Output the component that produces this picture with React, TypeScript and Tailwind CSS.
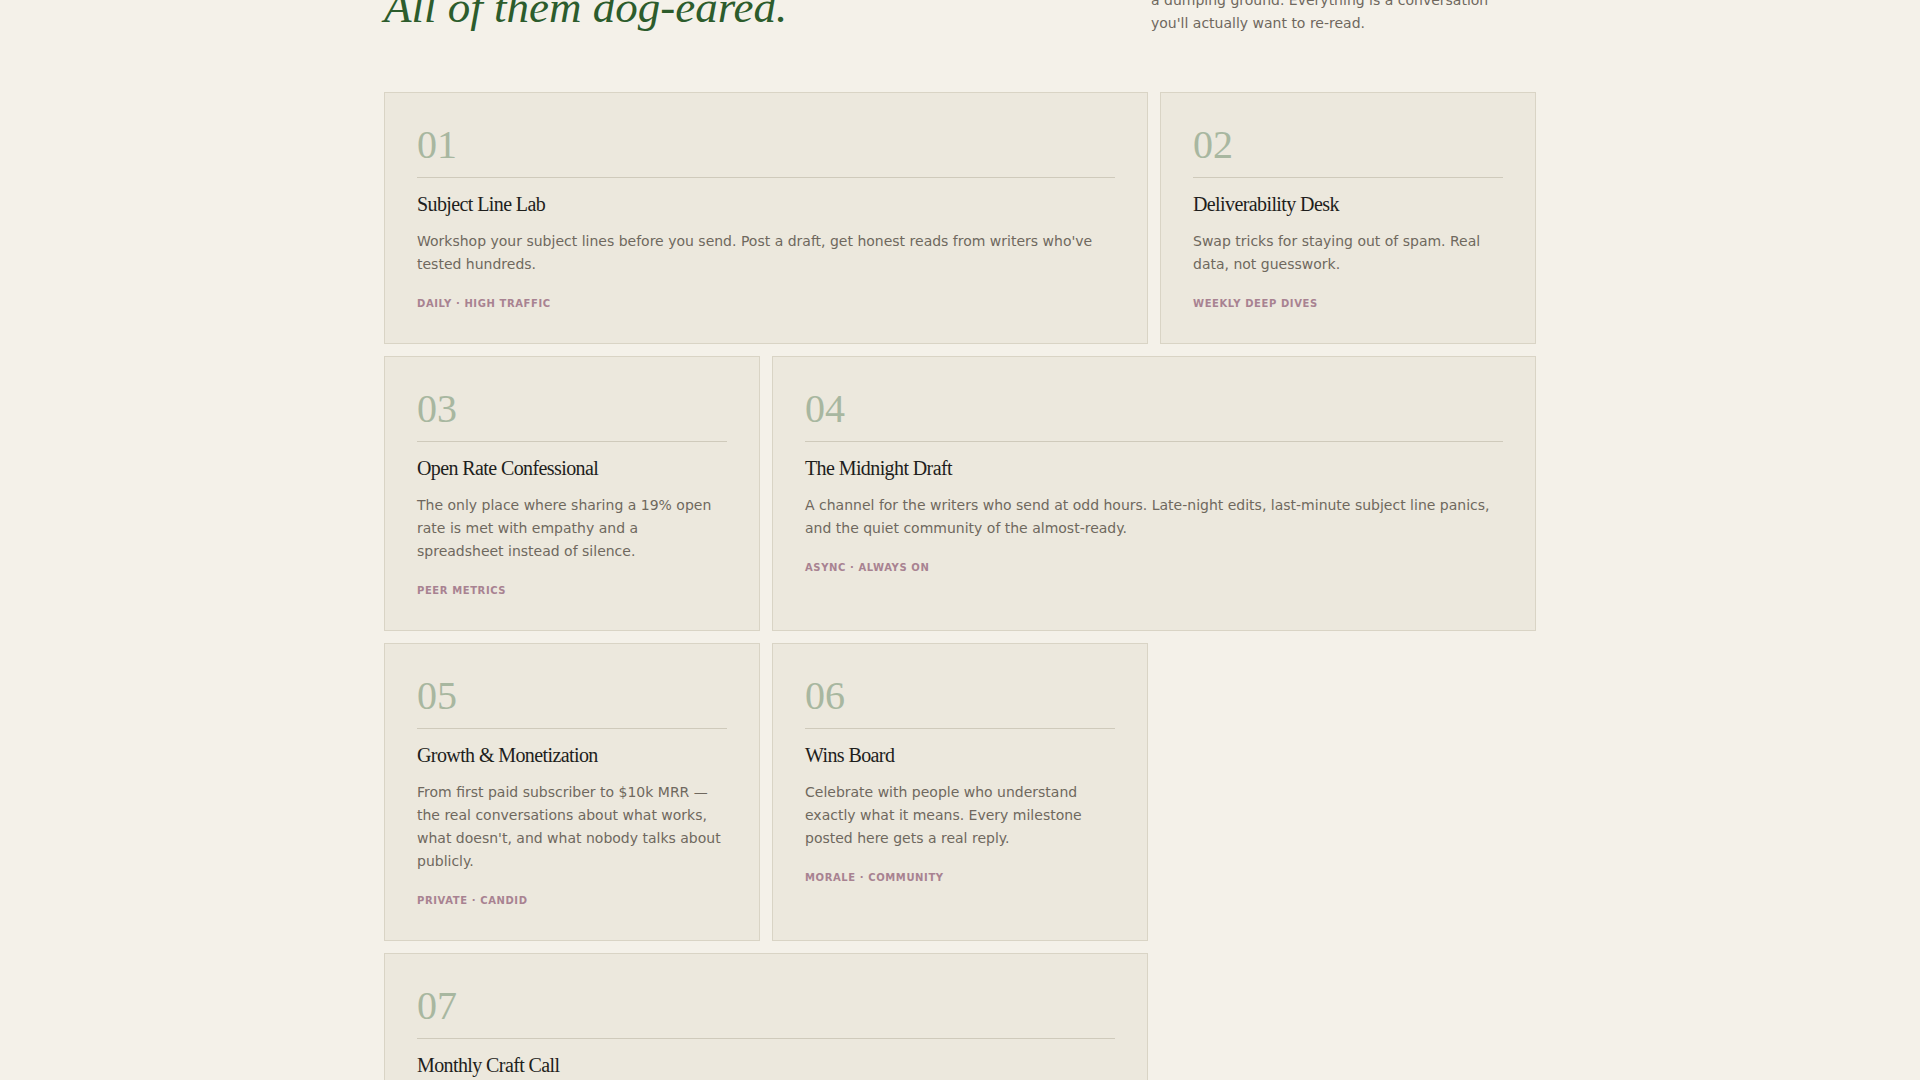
import React from "react";

type Channel = {
  num: string;
  title: string;
  body: string;
  tag: string;
  wide?: boolean;
};

const channels: Channel[] = [
  {
    num: "01",
    title: "Subject Line Lab",
    body: "Workshop your subject lines before you send. Post a draft, get honest reads from writers who've tested hundreds.",
    tag: "Daily · High traffic",
    wide: true,
  },
  {
    num: "02",
    title: "Deliverability Desk",
    body: "Swap tricks for staying out of spam. Real data, not guesswork.",
    tag: "Weekly deep dives",
  },
  {
    num: "03",
    title: "Open Rate Confessional",
    body: "The only place where sharing a 19% open rate is met with empathy and a spreadsheet instead of silence.",
    tag: "Peer metrics",
  },
  {
    num: "04",
    title: "The Midnight Draft",
    body: "A channel for the writers who send at odd hours. Late-night edits, last-minute subject line panics, and the quiet community of the almost-ready.",
    tag: "Async · Always on",
    wide: true,
  },
  {
    num: "05",
    title: "Growth & Monetization",
    body: "From first paid subscriber to $10k MRR — the real conversations about what works, what doesn't, and what nobody talks about publicly.",
    tag: "Private · Candid",
  },
  {
    num: "06",
    title: "Wins Board",
    body: "Celebrate with people who understand exactly what it means. Every milestone posted here gets a real reply.",
    tag: "Morale · Community",
  },
  {
    num: "07",
    title: "Monthly Craft Call",
    body: "Once a month we take one issue apart together — structure, voice, hooks — and rebuild it live.",
    tag: "Monthly · Live",
    wide: true,
  },
];

const serif = "font-['Liberation_Serif','Times_New_Roman',serif]";
const sans = "font-['DejaVu_Sans','Noto_Sans',sans-serif]";

const ChannelCard = ({ c }: { c: Channel }) => (
  <div
    className={`flex flex-col border border-[#d9d4c5] bg-[#ece8dd] p-8 ${
      c.wide ? "col-span-2" : ""
    }`}
  >
    <div
      className={`${serif} border-b border-[#cfcabb] pb-3 text-[40px] leading-none text-[#a8b7a0]`}
    >
      {c.num}
    </div>
    <h3
      className={`${serif} mt-3 text-[20px] leading-[28px] tracking-[-0.03em] text-[#1e1e1c]`}
    >
      {c.title}
    </h3>
    <p className={`${sans} mt-3 text-[14px] leading-[23px] text-[#6f685e]`}>
      {c.body}
    </p>
    <div
      className={`${sans} mt-5 text-[10px] font-bold uppercase leading-[15px] tracking-[0.06em] text-[#a88291]`}
    >
      {c.tag}
    </div>
  </div>
);

export default function App() {
  return (
    <div className="flex min-h-screen flex-col bg-[#f4f1e9]">
      <div className="mx-auto -mt-[17px] w-[1152px]">
        <header className="mb-[59px] flex items-end justify-between">
          <h2
            className={`${serif} text-[45px] italic leading-[1.1] text-[#2c5c2c]`}
          >
            All of them dog-eared.
          </h2>
          <div className="-mb-[2px] w-[385px] pr-[25px]">
            <p className={`${sans} text-[14px] leading-[23px] text-[#6f685e]`}>
              a dumping ground. Everything is a conversation you'll actually
              want to re-read.
            </p>
          </div>
        </header>

        <div className="grid grid-cols-3 gap-3">
          {channels.map((c) => (
            <ChannelCard key={c.num} c={c} />
          ))}
        </div>
      </div>
    </div>
  );
}
